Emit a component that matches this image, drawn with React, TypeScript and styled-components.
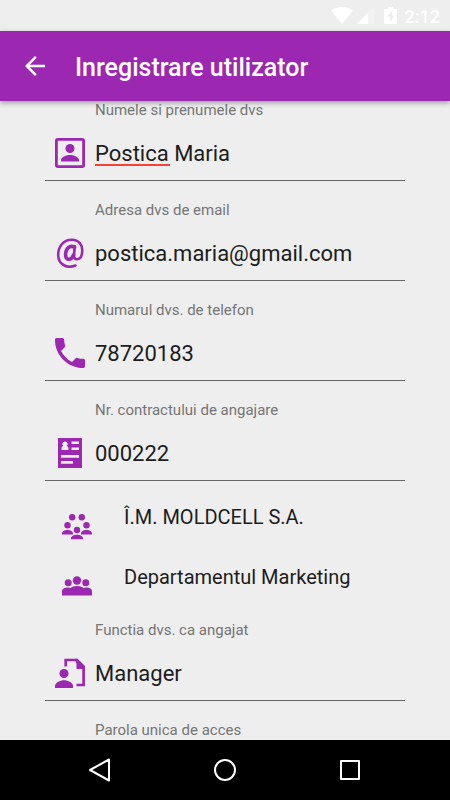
import React from 'react';
import styled, { createGlobalStyle } from 'styled-components';

const GlobalStyle = createGlobalStyle`
  * { box-sizing: border-box; }
  body { margin: 0; background: #eeeeee; font-family: Roboto, sans-serif; color: #212121; }
  button, input, select { font-family: inherit; color: inherit; border: 0; padding: 0; margin: 0; background: none; border-radius: 0; outline: none; }
  svg { display: block; flex: none; }
`;

const Screen = styled.div`
  display: flex;
  flex-direction: column;
  height: 100vh;
  overflow: hidden;
`;

const StatusBar = styled.div`
  flex: none;
  display: flex;
  align-items: center;
  justify-content: flex-end;
  height: 31px;
  padding-right: 10px;
  color: #ffffff;
`;

const Clock = styled.time`
  margin-left: 8px;
  font-size: 18px;
  line-height: 20px;
  padding-top: 2px;
  font-weight: 500;
`;

const StatusIcons = styled.div`
  display: flex;
  align-items: center;
  gap: 4px;
`;

const AppBar = styled.header`
  flex: none;
  position: relative;
  z-index: 1;
  display: flex;
  align-items: center;
  height: 70px;
  padding: 0 20px;
  gap: 25px;
  background: #9c27b0;
  color: #ffffff;
  box-shadow: 0 2px 5px rgba(0, 0, 0, 0.35);
`;

const BackButton = styled.button`
  display: flex;
  justify-content: center;
  width: 30px;
`;

const Title = styled.h1`
  margin: 0;
  padding-top: 3px;
  font-size: 25px;
  line-height: 30px;
  font-weight: 500;
`;

const Form = styled.form`
  flex: 1;
  min-height: 0;
  overflow: hidden;
  padding: 0 45px;
`;

const FieldBlock = styled.div`
  margin-bottom: 20px;
`;

const FieldLabel = styled.label`
  display: block;
  padding-left: 50px;
  font-size: 15px;
  line-height: 18px;
  color: #757575;
`;

const Control = styled.div`
  display: flex;
  align-items: center;
  gap: 10px;
  height: 54px;
  margin-top: 8px;
  padding: 0 0 2px 10px;
  border-bottom: 1px solid #666666;
  color: #9c27b0;
`;

const TextInput = styled.input<{ $misspelt?: boolean }>`
  flex: 1;
  min-width: 0;
  height: 30px;
  padding-top: 1px;
  font-size: 22px;
  color: #1c1c1c;
  background: ${p => (p.$misspelt ? 'linear-gradient(#f44336, #f44336) 0 26px / 75px 2px no-repeat' : 'none')};
`;

const Choices = styled.div`
  padding: 6px 0 14px 17px;
  margin-top: -20px;
`;

const Choice = styled.div`
  display: flex;
  gap: 32px;
  height: 60px;
  color: #9c27b0;
`;

const ChoiceIcon = styled.span`
  padding-top: 27px;
`;

const ChoiceSelect = styled.select`
  flex: 1;
  min-width: 0;
  height: 60px;
  appearance: none;
  font-size: 20px;
  color: #1c1c1c;
`;

const NavBar = styled.nav`
  flex: none;
  display: flex;
  align-items: center;
  justify-content: space-between;
  height: 60px;
  padding: 0 85px;
  background: #000000;
`;

const NavButton = styled.button`
  display: flex;
  justify-content: center;
  width: 30px;
`;

const iconProps = { width: 30, height: 30, viewBox: '0 0 30 30', fill: 'currentColor', 'aria-hidden': true } as const;

const PortraitIcon = () => (
  <svg {...iconProps}>
    <rect x="1.4" y="1.4" width="27.2" height="27.2" rx="1.6" fill="none" stroke="currentColor" strokeWidth="2.8" />
    <circle cx="15" cy="10.5" r="4.5" />
    <path d="M6 23.5v-1.4c0-3.3 6-5.1 9-5.1s9 1.8 9 5.1v1.4z" />
  </svg>
);

const AtIcon = () => (
  <svg {...iconProps} fill="none" stroke="currentColor" strokeLinecap="round">
    <path strokeWidth="2.6" d="M20.5 27.500C12 31 3.500 26.500 3.200 17.500C2.900 8.500 8.700 1.800 16.500 1.800C24 1.800 27.700 6.800 27.200 13.500C26.900 18.500 24.600 21.200 22 21.200C19.500 21.200 18.700 19.500 19 16.500L19.800 8.500" />
    <path strokeWidth="3.6" d="M19.500 9C14.500 7 10.900 10.500 10.600 16C10.300 22.500 16 23.200 18.600 17" />
  </svg>
);

const PhoneIcon = () => (
  <svg {...iconProps} viewBox="0 0 18 18">
    <path d="M3.620 7.790c1.440 2.830 3.760 5.140 6.590 6.590l2.200-2.200c.27-.27.67-.36 1.020-.24 1.120.37 2.330.57 3.570.57.55 0 1 .45 1 1V17c0 .55-.45 1-1 1-9.390 0-17-7.610-17-17 0-.55.45-1 1-1h3.500c.55 0 1 .45 1 1 0 1.250.2 2.450.57 3.570.11.35.03.74-.25 1.020l-2.200 2.200z" />
  </svg>
);

const ContractIcon = () => (
  <svg {...iconProps}>
    <path fillRule="evenodd" d="M3 0h24v30H3zM6.500 12h7v-1.500c0-1.400-.8-2.100-1.900-2.500a2.500 2.500 0 1 0-3.200 0C7.300 8.400 6.500 9.100 6.500 10.500zM16.500 3.500v2.500H24V3.500zM16.500 9.500v2.500H24V9.500zM6 17v2.800h18V17zM6 23v2.800h12V23z" />
  </svg>
);

const CompanyIcon = () => (
  <svg {...iconProps} height={26} viewBox="0 0 30 26">
    <circle cx="10.200" cy="3.200" r="3.200" />
    <circle cx="19.800" cy="3.200" r="3.200" />
    <circle cx="5.500" cy="11.200" r="3.200" />
    <circle cx="24.500" cy="11.200" r="3.200" />
    <circle cx="15" cy="16" r="3.200" />
    <path d="M0 20.500v-1c0-2 2.500-3.500 5.500-3.500s5.500 1.500 5.500 3.500v1zM19 20.500v-1c0-2 2.500-3.500 5.500-3.500s5.500 1.500 5.500 3.500v1zM9 25.300v-1c0-2 2.700-3.600 6-3.600s6 1.600 6 3.600v1z" />
  </svg>
);

const DepartmentIcon = () => (
  <svg {...iconProps} height={26} viewBox="0 3 30 26">
    <circle cx="15" cy="9.500" r="4.200" />
    <circle cx="6.200" cy="11.700" r="3.500" />
    <circle cx="23.800" cy="11.700" r="3.500" />
    <path d="M0 24.500v-4c0-3 2.500-4 6-4 1 0 1.700.2 2.300.5C10 15.700 12 15 15 15s5 .7 6.700 2c.6-.3 1.300-.5 2.300-.5 3.500 0 6 1 6 4v4z" />
  </svg>
);

const RoleIcon = () => (
  <svg {...iconProps}>
    <path fill="none" stroke="currentColor" strokeWidth="2.700" d="M10.700 8.500V2h11.100l6.800 6.800v18.200H21.500" />
    <path d="M20 .7h2.400L30 8.300V11h-8.500V6z" />
    <circle cx="9" cy="15.500" r="4.500" />
    <path d="M0 30v-2c0-3.500 5-5.800 9-5.800s9 2.300 9 5.800v2z" />
  </svg>
);

interface FieldProps {
  id: string;
  label: string;
  value?: string;
  type?: string;
  misspelt?: boolean;
  icon?: React.ReactNode;
}

const Field = ({ id, label, value, type = 'text', misspelt, icon }: FieldProps) => (
  <FieldBlock>
    <FieldLabel htmlFor={id}>{label}</FieldLabel>
    <Control>
      {icon}
      <TextInput id={id} type={type} defaultValue={value} $misspelt={misspelt} spellCheck={false} />
    </Control>
  </FieldBlock>
);

export default function App() {
  return (
    <Screen>
      <GlobalStyle />
      <StatusBar>
        <StatusIcons>
          <svg width="22" height="17" viewBox="0 0 22 17" fill="#fff" aria-hidden>
            <path d="M11 17L0 3.500C3 1.200 6.700 0 11 0s8 1.200 11 3.500z" />
          </svg>
          <svg width="17" height="17" viewBox="0 0 17 17" fill="#fff" aria-hidden>
            <path opacity=".3" d="M0 17L17 0v17z" />
            <path d="M0 17L11 6v11z" />
          </svg>
        </StatusIcons>
        <svg width="23" height="17" viewBox="0 0 23 17" fill="#fff" aria-hidden>
          <path fillRule="evenodd" d="M14 0h5v2h4v15H10V2h4zM18 3.500l-5 6h3V15l4.500-6.500H18z" />
        </svg>
        <Clock>2:12</Clock>
      </StatusBar>
      <AppBar>
        <BackButton type="button" aria-label="Inapoi">
          <svg width="20" height="20" viewBox="4 4 16 16" fill="currentColor" aria-hidden>
            <path d="M20 11H7.830l5.590-5.590L12 4l-8 8 8 8 1.410-1.410L7.830 13H20z" />
          </svg>
        </BackButton>
        <Title>Inregistrare utilizator</Title>
      </AppBar>
      <Form>
        <Field id="name" label="Numele si prenumele dvs" value="Postica Maria" misspelt icon={<PortraitIcon />} />
        <Field id="email" type="email" label="Adresa dvs de email" value="postica.maria@gmail.com" icon={<AtIcon />} />
        <Field id="phone" type="tel" label="Numarul dvs. de telefon" value="78720183" icon={<PhoneIcon />} />
        <Field id="contract" label="Nr. contractului de angajare" value="000222" icon={<ContractIcon />} />
        <Choices>
          <Choice>
            <ChoiceIcon><CompanyIcon /></ChoiceIcon>
            <ChoiceSelect aria-label="Companie"><option>Î.M. MOLDCELL S.A.</option></ChoiceSelect>
          </Choice>
          <Choice>
            <ChoiceIcon><DepartmentIcon /></ChoiceIcon>
            <ChoiceSelect aria-label="Departament"><option>Departamentul Marketing</option></ChoiceSelect>
          </Choice>
        </Choices>
        <Field id="role" label="Functia dvs. ca angajat" value="Manager" icon={<RoleIcon />} />
        <Field id="password" type="password" label="Parola unica de acces" />
      </Form>
      <NavBar>
        <NavButton type="button" aria-label="Back">
          <svg width="24" height="24" viewBox="0 0 24 24" fill="none" stroke="#fff" strokeWidth="2" strokeLinejoin="round" aria-hidden>
            <path d="M21 1.500v21L2 12z" />
          </svg>
        </NavButton>
        <NavButton type="button" aria-label="Home">
          <svg width="24" height="24" viewBox="0 0 24 24" fill="none" stroke="#fff" strokeWidth="2" aria-hidden>
            <circle cx="12" cy="12" r="10" />
          </svg>
        </NavButton>
        <NavButton type="button" aria-label="Recents">
          <svg width="20" height="20" viewBox="0 0 20 20" fill="none" stroke="#fff" strokeWidth="2" strokeLinejoin="round" aria-hidden>
            <rect x="1" y="1" width="18" height="18" />
          </svg>
        </NavButton>
      </NavBar>
    </Screen>
  );
}
